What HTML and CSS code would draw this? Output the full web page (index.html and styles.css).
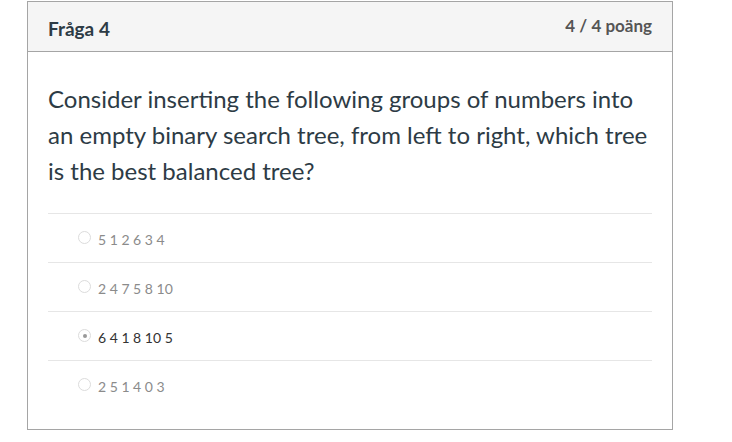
FILE: index.html
```html
<!DOCTYPE html>
<html lang="sv">
<head>
<meta charset="utf-8">
<title>Fråga 4</title>
<link rel="stylesheet" href="styles.css">
</head>
<body>
<div class="quiz">
  <div class="header">
    <span class="title">Fråga 4</span>
    <span class="points">4 / 4 poäng</span>
  </div>
  <div class="content">
    <p class="question">Consider inserting the following groups of numbers into an empty binary search tree, from left to right, which tree is the best balanced tree?</p>
    <div class="answers">
      <div class="answer"><span class="radio"></span><span class="label">5 1 2 6 3 4</span></div>
      <div class="answer"><span class="radio"></span><span class="label">2 4 7 5 8 10</span></div>
      <div class="answer selected"><span class="radio"></span><span class="label">6 4 1 8 10 5</span></div>
      <div class="answer"><span class="radio"></span><span class="label">2 5 1 4 0 3</span></div>
    </div>
  </div>
</div>
</body>
</html>
```

FILE: styles.css
```css
html, body {
  margin: 0;
  padding: 0;
  background: #fff;
}
body {
  padding: 1px 0 0 27px;
  font-family: Lato, "Open Sans", sans-serif;
  color: #2d3b45;
}
.quiz {
  width: 644px;
  height: 427px;
  border: 1px solid #a5a5a5;
  display: flex;
  flex-direction: column;
}
.header {
  background: #f5f5f5;
  border-bottom: 1px solid #a5a5a5;
  display: flex;
  align-items: center;
  justify-content: space-between;
  padding: 3px 20px 0 20px;
  box-sizing: border-box;
  height: 50px;
}
.title {
  font-weight: 700;
  font-size: 19px;
  color: #2d3b45;
}
.points {
  font-weight: 700;
  font-size: 17px;
  color: #555;
  margin-top: -5px;
}
.content {
  padding: 29px 20px 20px 20px;
}
.question {
  margin: 0 0 24px 0;
  font-size: 24px;
  line-height: 36px;
  color: #2d3b45;
}
.answers {
  display: flex;
  flex-direction: column;
}
.answer {
  border-top: 1px solid #e6e6e6;
  height: 48px;
  display: flex;
  align-items: center;
  padding-left: 30px;
}
.radio {
  width: 11px;
  height: 11px;
  border: 1px solid #dcdcdc;
  border-radius: 50%;
  margin-right: 7px;
  display: flex;
  align-items: center;
  justify-content: center;
  box-sizing: content-box;
  margin-top: -1px;
}
.selected .radio::after {
  content: "";
  width: 4px;
  height: 4px;
  border-radius: 50%;
  background: #999;
}
.label {
  font-size: 14px;
  color: #8b8b8b;
  padding-top: 2px;
}
.selected .label {
  color: #333;
}
```
